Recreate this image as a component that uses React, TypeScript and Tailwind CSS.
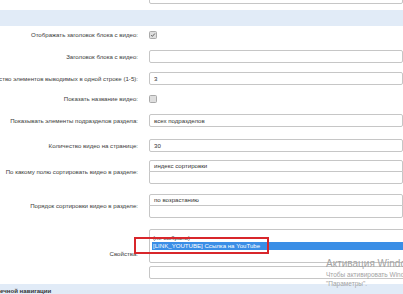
import type { ReactNode } from "react"

const font = { fontFamily: '"Liberation Sans", Arial, sans-serif' }

function Label({ children }: { children: ReactNode }) {
  return (
    <div className="flex justify-end w-[138px] shrink-0 mr-[11px]">
      <span className="whitespace-nowrap text-[6.1px] text-[#3a3a3a]">{children}</span>
    </div>
  )
}

function Row({ label, children, className = "" }: { label: string; children: ReactNode; className?: string }) {
  return (
    <div className={`flex items-center ${className}`}>
      <Label>{label}</Label>
      {children}
    </div>
  )
}

function Input({ value = "" }: { value?: string }) {
  return (
    <div className="h-[13px] w-[300px] rounded-[2px] border border-[#c6c6c6] bg-white px-[4px] flex items-center text-[6.1px] text-[#333]">
      {value}
    </div>
  )
}

function Checkbox({ checked }: { checked?: boolean }) {
  return (
    <div className="h-[8px] w-[8px] rounded-[1.5px] border border-[#a9a9a9] bg-[#dedede] flex items-center justify-center">
      {checked && (
        <svg viewBox="0 0 8 8" className="h-[6px] w-[6px]">
          <path d="M1.5 4.2 L3.2 5.8 L6.5 2" fill="none" stroke="#555" strokeWidth="1.2" />
        </svg>
      )}
    </div>
  )
}

function ListBox({ value }: { value: string }) {
  return (
    <div className="w-[300px]">
      <div className="h-[12px] rounded-t-[2px] border border-[#c6c6c6] bg-white px-[4px] flex items-center text-[6.1px] text-[#333]">
        {value}
      </div>
      <div className="h-[13px] -mt-px rounded-b-[2px] border border-[#c6c6c6] bg-white" />
    </div>
  )
}

export default function App() {
  return (
    <div className="relative w-[403px] h-[294px] overflow-hidden bg-white" style={font}>
      <div className="flex flex-col -mt-[10px]">
        <Row label="Максимальное количество элементов раздела:">
          <div className="h-[14px] w-[300px] rounded-[2px] border border-[#c6c6c6] bg-white px-[4px] flex items-end pb-[1px] text-[6.1px] text-[#333]">
            100
          </div>
        </Row>

        <div className="mt-[6px] h-[16px] bg-[#e1ebf7]" />

        <Row label="Отображать заголовок блока с видео:" className="mt-[5px] h-[8px]">
          <Checkbox checked />
        </Row>

        <Row label="Заголовок блока с видео:" className="mt-[11px]">
          <Input />
        </Row>

        <Row label="Количество элементов выводимых в одной строке (1-5):" className="mt-[9px]">
          <Input value="3" />
        </Row>

        <Row label="Показать название видео:" className="mt-[10px] h-[8px]">
          <Checkbox />
        </Row>

        <Row label="Показывать элементы подразделов раздела:" className="mt-[11px]">
          <Input value="всех подразделов" />
        </Row>

        <Row label="Количество видео на странице:" className="mt-[12px]">
          <Input value="30" />
        </Row>

        <Row label="По какому полю сортировать видео в разделе:" className="mt-[8px]">
          <ListBox value="индекс сортировки" />
        </Row>

        <Row label="Порядок сортировки видео в разделе:" className="mt-[10px]">
          <ListBox value="по возрастанию" />
        </Row>

        <Row label="Свойства:" className="mt-[11px]">
          <div className="flex flex-col gap-[3px]">
            <div className="h-[34px] w-[300px] rounded-[2px] border border-[#c6c6c6] bg-white pt-[4px] pl-[2px] text-[6.1px]">
              <div className="h-[8px] pl-[1px] flex items-center text-[#333]">(не выбрано)</div>
              <div className="h-[8px] pl-[1px] flex items-center bg-[#3a8ee6] text-white">
                [LINK_YOUTUBE] Ссылка на YouTube
              </div>
            </div>
            <Input />
          </div>
        </Row>

        <div className="mt-[5px] h-[14px] bg-[#e1ebf7] flex items-center text-[6.1px] font-bold text-[#333] whitespace-nowrap">
          ечной навигации
        </div>
      </div>

      <div className="absolute left-[134px] top-[237px] h-[17px] w-[135px] border-2 border-[#d8262b]" />

      <div className="absolute left-[326px] top-[259px] text-[#a3a3a3] leading-none whitespace-nowrap">
        <div className="text-[10px]">Активация Windows</div>
        <div className="text-[6.5px] mt-[3px]">Чтобы активировать Windows, перейдите в раздел</div>
        <div className="text-[6.5px] mt-[2px]">"Параметры".</div>
      </div>
    </div>
  )
}
